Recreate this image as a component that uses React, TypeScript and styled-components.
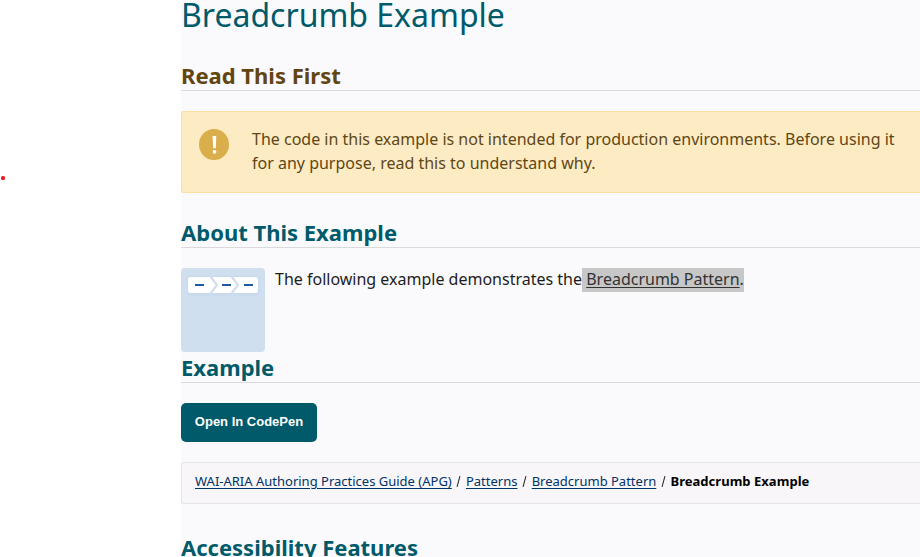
import React from "react";
import styled, { createGlobalStyle } from "styled-components";

const GlobalStyle = createGlobalStyle`
  * { box-sizing: border-box; }
  html, body { margin: 0; overflow: hidden; background: #fff; }
  body { font: 16px/24px "Noto Sans", sans-serif; color: #1d1d1d; }
`;

const Page = styled.div`
  display: flex;
  width: 920px;
  height: 557px;
  overflow: hidden;
`;

const Sidebar = styled.aside`
  flex: 0 0 181px;
  padding: 176px 0 0 1px;
`;

const Dot = styled.div`
  width: 4px;
  height: 4px;
  border-radius: 1.5px;
  background: #ed1c24;
`;

const Main = styled.main`
  flex: 1;
  min-width: 0;
  background: #fafafc;
`;

const Title = styled.h1`
  margin: 0;
  height: 62px;
  font-size: 32px;
  line-height: 30px;
  font-weight: 400;
  color: #005a6a;
  white-space: nowrap;
`;

const Heading = styled.h2<{ $color?: string }>`
  margin: 0;
  height: 29px;
  border-bottom: 1px solid #dadadd;
  font-size: 22px;
  line-height: 27px;
  font-weight: 700;
  color: ${(p) => p.$color ?? "#005a6a"};
  white-space: nowrap;
`;

const Notice = styled.section`
  display: flex;
  margin: 20px 0 26px;
  height: 82px;
  padding: 15px 0 0 17px;
  border: 1px solid #fbe0a0;
  border-right: 0;
  border-radius: 3px 0 0 3px;
  background: #fdebc4;
  color: #5f4715;
`;

const NoticeIcon = styled.svg`
  flex: none;
  width: 30px;
  height: 31px;
  margin: 2px 23px 0 0;
`;

const NoticeText = styled.p`
  margin: 0;
  white-space: nowrap;
`;

const About = styled.div`
  display: flex;
  gap: 10px;
  height: 86px;
  margin-top: 20px;
`;

const Thumbnail = styled.svg`
  flex: none;
  width: 84px;
  height: 84px;
`;

const AboutText = styled.p`
  margin: 0;
  line-height: 22px;
  white-space: pre;
`;

const Selected = styled.span`
  display: inline-block;
  height: 24px;
  background: #c7c7c7;
  color: #333;
`;

const PatternLink = styled.a`
  text-decoration: underline;
  text-decoration-thickness: 1px;
  text-underline-offset: 2px;
`;

const CodePenButton = styled.button`
  display: block;
  width: 136px;
  height: 39px;
  margin: 20px 0;
  padding: 0 0 2px;
  border: 0;
  border-radius: 5px;
  background: #005a6a;
  color: #fff;
  font: 700 13px/16px "Liberation Sans", Arial, sans-serif;
  white-space: nowrap;
`;

const Breadcrumb = styled.nav`
  height: 42px;
  margin-bottom: 30px;
  padding: 8px 13px;
  border: 1px solid #e4e3e7;
  border-right: 0;
  border-radius: 3px 0 0 3px;
  background: #f8f6f9;
`;

const Crumbs = styled.ol`
  display: flex;
  margin: 0;
  padding: 0;
  list-style: none;
  font-size: 13px;
  line-height: 21px;
  white-space: nowrap;
`;

const Crumb = styled.li`
  display: flex;

  & + &::before {
    content: "";
    align-self: flex-start;
    height: 11px;
    margin: 5px 6.6px 0;
    border-right: 1px solid #222;
    transform: rotate(15deg);
  }
`;

const CrumbLink = styled.a`
  color: #003366;
  text-decoration: underline;
  text-decoration-thickness: 1px;
  text-underline-offset: 2px;
`;

const CurrentCrumb = styled.span`
  font-weight: 700;
  letter-spacing: 0.03px;
  color: #000;
`;

const crumbs = ["WAI-ARIA Authoring Practices Guide (APG)", "Patterns", "Breadcrumb Pattern"];

export default function App() {
  return (
    <>
      <GlobalStyle />
      <Page>
        <Sidebar>
          <Dot />
        </Sidebar>
        <Main>
          <Title>Breadcrumb Example</Title>
          <Heading $color="#624511">Read This First</Heading>
          <Notice>
            <NoticeIcon viewBox="0 0 30 31">
              <ellipse cx="15" cy="15.5" rx="15" ry="15.5" fill="#d9ae4b" />
              <path d="M13.500 7.200q1.900-.7 3.800 0l-.5 12h-2.500z" fill="#fff" />
              <circle cx="15.500" cy="22.800" r="1.900" fill="#fff" />
            </NoticeIcon>
            <NoticeText>
              The code in this example is not intended for production environments. Before using it
              <br />
              for any purpose, read this to understand why.
            </NoticeText>
          </Notice>
          <Heading>About This Example</Heading>
          <About>
            <Thumbnail viewBox="0 0 84 84">
              <rect width="84" height="84" rx="4" fill="#d0dff0" />
              <rect x="5.500" y="7.500" width="73" height="20" rx="4" fill="#c9daed" />
              <rect x="7" y="9" width="70" height="16" rx="2.500" fill="#fff" />
              <path d="M29.500 8.500l6.500 8.500-6.500 8.500M50.500 8.500l6.500 8.500-6.500 8.500" fill="none" stroke="#d0dff0" strokeWidth="2.200" />
              <path d="M14 17h9M41 17h9M63 17h9" stroke="#1d58a0" strokeWidth="2" />
            </Thumbnail>
            <AboutText>
              The following example demonstrates the
              <Selected>
                {" "}
                <PatternLink>Breadcrumb Pattern</PatternLink>.
              </Selected>
            </AboutText>
          </About>
          <Heading>Example</Heading>
          <CodePenButton>Open In CodePen</CodePenButton>
          <Breadcrumb>
            <Crumbs>
              {crumbs.map((label) => (
                <Crumb key={label}>
                  <CrumbLink>{label}</CrumbLink>
                </Crumb>
              ))}
              <Crumb>
                <CurrentCrumb>Breadcrumb Example</CurrentCrumb>
              </Crumb>
            </Crumbs>
          </Breadcrumb>
          <Heading>Accessibility Features</Heading>
        </Main>
      </Page>
    </>
  );
}
